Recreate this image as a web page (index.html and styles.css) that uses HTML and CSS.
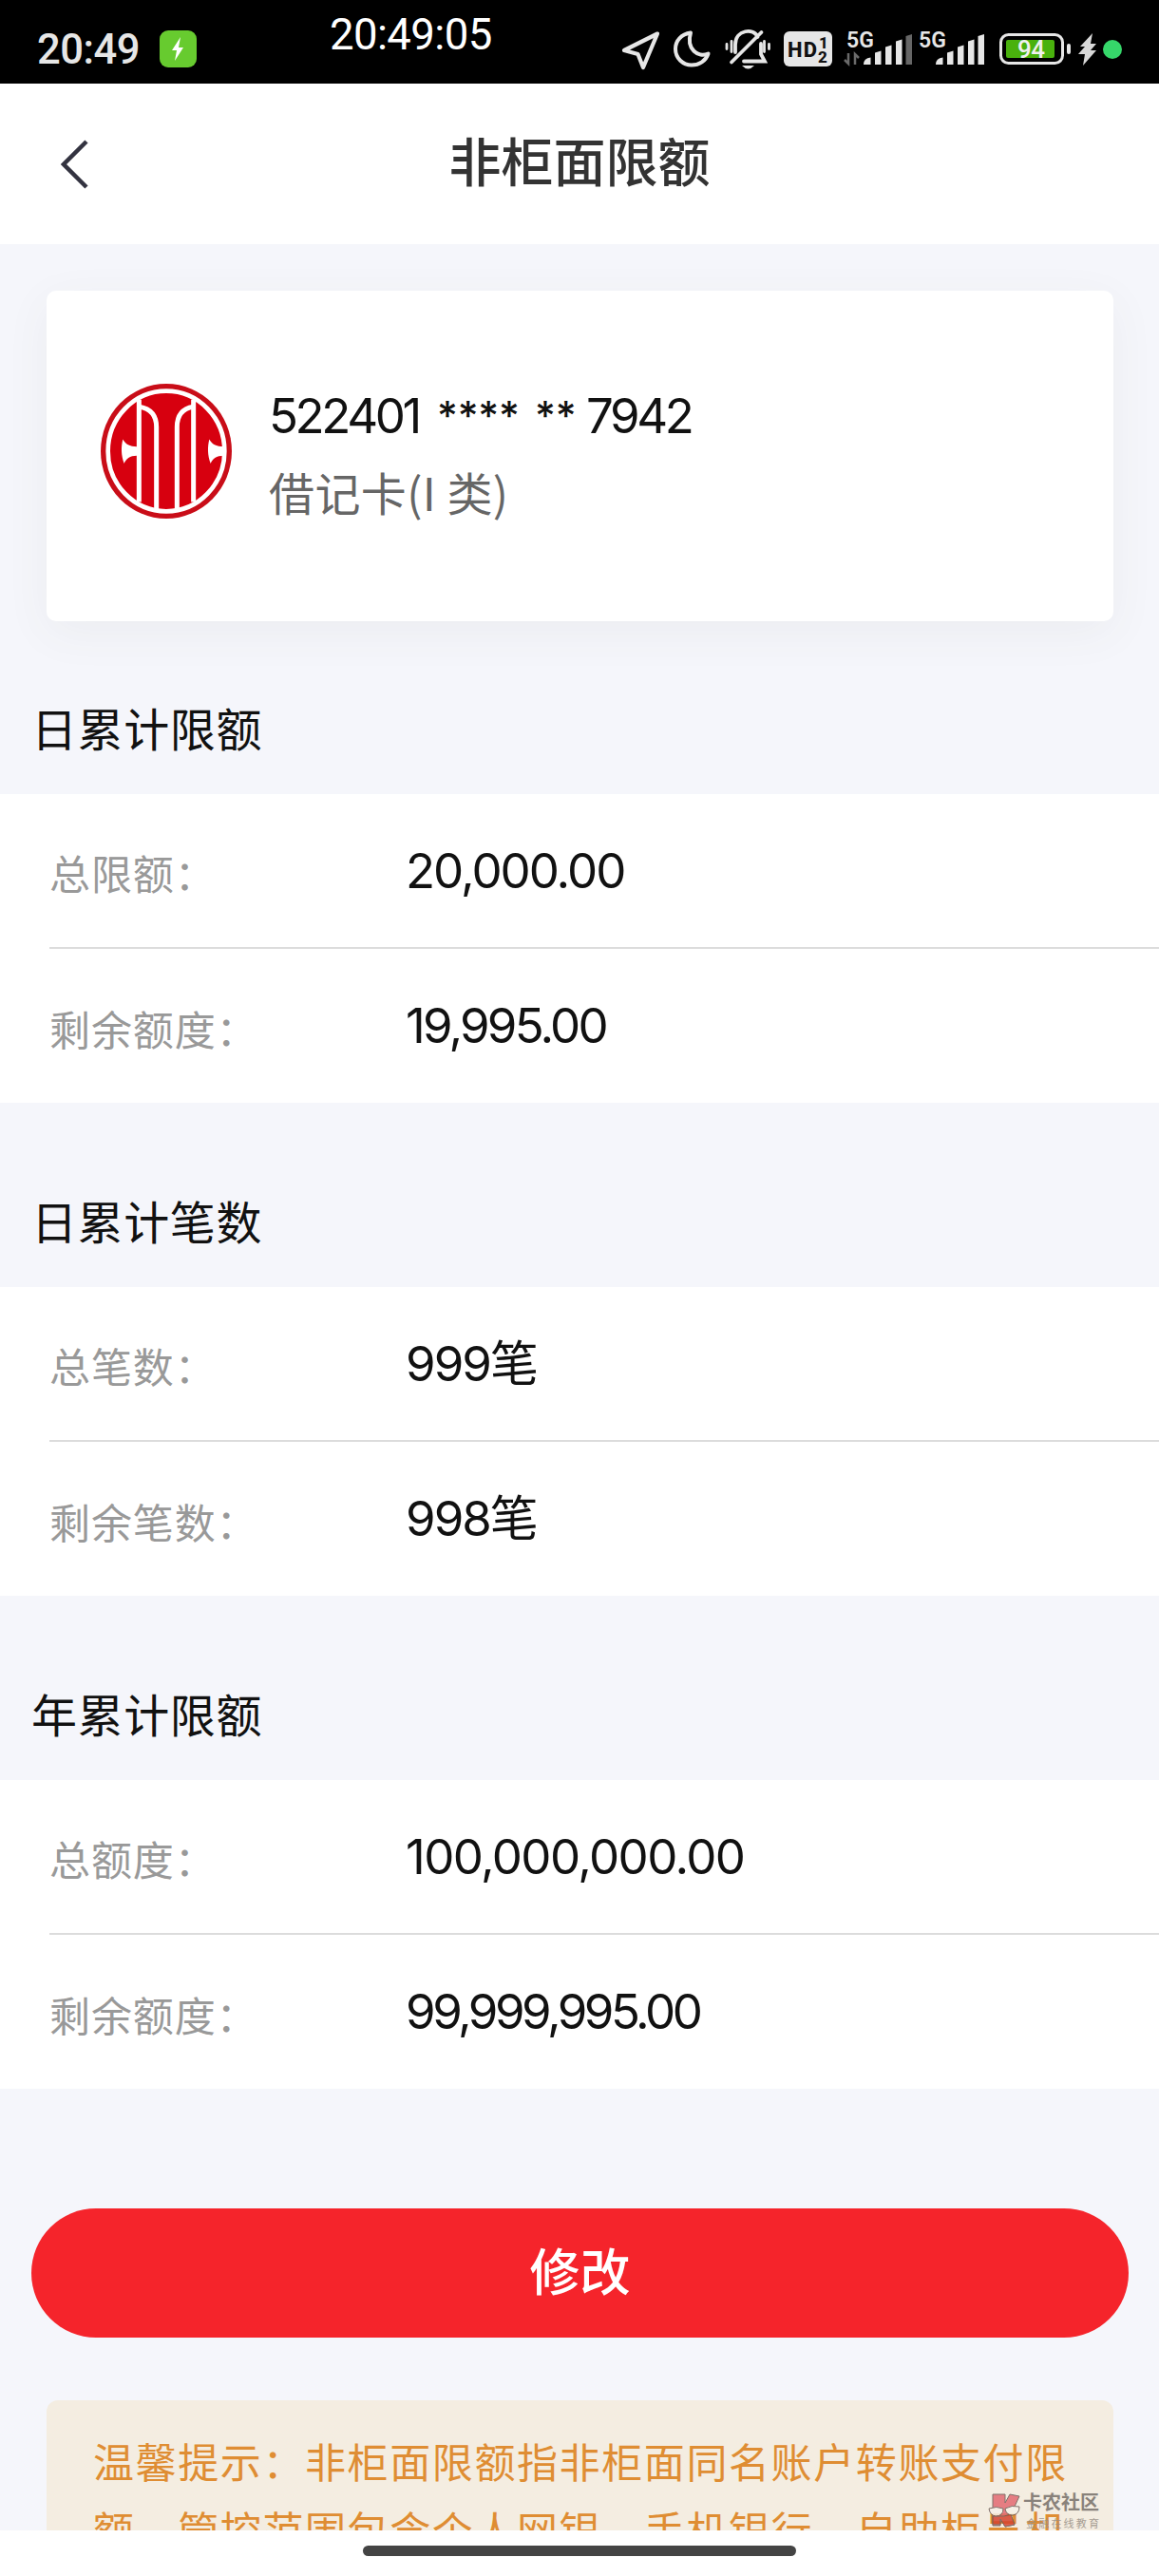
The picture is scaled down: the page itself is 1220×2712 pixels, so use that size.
FILE: index.html
```
<!DOCTYPE html>
<html lang="zh-CN">
<head>
    <meta charset="UTF-8">
    <meta name="viewport" content="width=device-width, initial-scale=1.0">
    <title>非柜面限额</title>
    <link rel="stylesheet" href="styles.css">
</head>
<body>
    <div class="status-bar">
        <span class="status-time">20:49</span>
        <svg class="charge-badge" viewBox="0 0 39 39">
            <rect width="39" height="39" rx="9" fill="#67cb2f"/>
            <path d="M22 7L13 21h5l-2 11 9-14h-5z" fill="#fff"/>
        </svg>
        <span class="status-clock">20:49:05</span>

        <div class="status-icons">
            <!-- location -->
            <svg width="50" height="50" viewBox="652 28 50 50">
                <path d="M692 35.500L657 53l14.500 4L677 71z" fill="none" stroke="#e6e6e6" stroke-width="4.200" stroke-linejoin="round"/>
            </svg>
            <!-- do not disturb -->
            <svg width="53" height="50" viewBox="702 28 53 50">
                <path d="M727 34.500C717 36 711 43 711 51.500C711 61.500 719 68.500 728 68.500C736 68.500 743 64 745.500 56.500C735 61 722 52 727 34.500z" fill="none" stroke="#e6e6e6" stroke-width="4" stroke-linejoin="round"/>
            </svg>
            <!-- muted bell -->
            <svg width="62" height="50" viewBox="755 28 62 50">
                <g fill="none" stroke="#e6e6e6" stroke-width="3.800" stroke-linecap="round">
                    <path d="M774 55V47C774 31 794 29 797.500 39M801 46V57L805 64.500H783M801.500 34L770 65.500"/>
                    <path d="M765 46.500V51.500M770 43.500V54.500M804.500 43.500V54.500M809.500 46.500V51.500" stroke-width="2.800"/>
                </g>
                <path d="M781 69h13q-6.500 7-13 0z" fill="#e6e6e6"/>
            </svg>
            <!-- HD voice -->
            <svg width="65" height="50" viewBox="817 28 65 50">
                <rect x="825" y="33" width="51" height="37" rx="6" fill="#e6e6e6"/>
                <g class="hd-text">
                    <text x="829" y="59.500" font-size="22" textLength="31">HD</text>
                    <text x="862" y="51" font-size="17">1</text>
                    <text x="861" y="66" font-size="17">2</text>
                </g>
            </svg>
            <svg width="81" height="50" viewBox="882 28 81 50">
                <text class="net-text" x="891" y="50" textLength="29">5G</text>
                <path d="M893 56v11l-4-4M900 68V57l4 4" fill="none" stroke="#6a6a6a" stroke-width="2.500"/>
                <path d="M909 68q0-7 7.500-7.500V68zM921 68V55.500l6.500-2V68zM932 68V49.500l6.500-2V68zM943 68V43.500l6.500-2V68z" fill="#e6e6e6"/>
                <path d="M953.500 68V38l6.500-2v32z" fill="#666"/>
            </svg>
            <svg width="79" height="50" viewBox="963 28 79 50">
                <text class="net-text" x="967" y="50" textLength="29">5G</text>
                <path d="M985 68q0-7 7.500-7.500V68zM997 68V55.500l6.500-2V68zM1008 68V49.500l6.500-2V68zM1019 68V43.500l6.500-2V68zM1029.500 68V38l6.500-2v32z" fill="#e6e6e6"/>
            </svg>
            <!-- battery -->
            <svg width="88" height="50" viewBox="1042 28 88 50">
                <rect x="1053.500" y="36.500" width="65" height="30" rx="8" fill="none" stroke="#e6e6e6" stroke-width="3"/>
                <rect x="1059" y="42" width="51" height="19" rx="2" fill="#49b10d"/>
                <rect x="1123" y="46" width="4" height="11" rx="2" fill="#e6e6e6"/>
                <text class="battery-text" x="1071" y="61" textLength="29">94</text>
            </svg>
            <svg width="27" height="50" viewBox="1130 28 27 50">
                <path d="M1150 35L1137 49h5l-7 8h7l-2 12 14-16h-6l6-7h-6z" fill="#d8d8d8"/>
            </svg>
            <svg width="28" height="50" viewBox="1157 28 28 50">
                <circle cx="1171" cy="52" r="10" fill="#36d76a"/>
            </svg>
        </div>
    </div>

    <header class="nav-bar">
        <svg class="back-icon" viewBox="0 0 30 52">
            <path d="M27 2L3 26l24 24" fill="none" stroke="#333340" stroke-width="4.500"/>
        </svg>
        <h1>非柜面限额</h1>
    </header>

    <main class="content">
        <div class="card">
            <svg class="bank-logo" viewBox="48 42 414 424" preserveAspectRatio="none">
                <ellipse cx="255" cy="254" rx="207" ry="212" fill="#c90d18"/>
                <ellipse cx="255" cy="254" rx="184" ry="189" fill="#d7000f" stroke="#fff" stroke-width="14"/>
                <g fill="none" stroke="#fff" stroke-width="15">
                    <path d="M169 92V414M341 92V414"/>
                    <path d="M170 114C204 120 224 140 224 178V440M340 114C306 120 289 140 289 178V440"/>
                </g>
                <path d="M118 217C126 232 140 240 162 240V268C140 268 128 278 122 293C112 268 112 240 118 217zM391 217C399 232 412 240 438 240V268C412 268 401 278 395 293C385 268 385 240 391 217z" fill="#fff"/>
            </svg>
            <div class="card-info">
                <div class="card-number">
                    <span class="num-head">522401</span>
                    <span class="mask">****</span>
                    <span class="mask">**</span>
                    <span class="num-tail">7942</span>
                </div>
                <div class="card-type">借记卡(I 类)</div>
            </div>
        </div>

        <section class="group">
            <h2>日累计限额</h2>
            <div class="list">
                <div class="row">
                    <span class="label">总限额：</span>
                    <span class="value">20,000.00</span>
                </div>
                <div class="row">
                    <span class="label">剩余额度：</span>
                    <span class="value tight">19,995.00</span>
                </div>
            </div>
        </section>

        <section class="group">
            <h2>日累计笔数</h2>
            <div class="list">
                <div class="row">
                    <span class="label">总笔数：</span>
                    <span class="value">999笔</span>
                </div>
                <div class="row">
                    <span class="label">剩余笔数：</span>
                    <span class="value">998笔</span>
                </div>
            </div>
        </section>

        <section class="group">
            <h2>年累计限额</h2>
            <div class="list">
                <div class="row">
                    <span class="label">总额度：</span>
                    <span class="value loose">100,000,000.00</span>
                </div>
                <div class="row">
                    <span class="label">剩余额度：</span>
                    <span class="value tighter">99,999,995.00</span>
                </div>
            </div>
        </section>

        <button class="modify-btn">修改</button>

        <div class="tips">温馨提示：非柜面限额指非柜面同名账户转账支付限额，管控范围包含个人网银、手机银行、自助柜员机</div>
    </main>

    <footer class="home-area">
        <div class="home-bar"></div>
    </footer>

    <div class="watermark">
        <svg width="34" height="36" viewBox="0 0 34 36">
            <g stroke="#6b5a55" stroke-width="1">
                <path d="M5 1h13v9l5-9 10 2-6 13-4 4 5 13-10 2-5-8v7H5z" fill="#e36a72"/>
                <path d="M5 24h12l7-2 4 11-10 2-5-8v6H5z" fill="#d6452f"/>
                <path d="M1 16q8-3 15 0 0 8-8 8-6-1-7-8zM18 16q7-4 15-2 0 8-7 9-7 0-8-7z" fill="#f7f1e8"/>
            </g>
        </svg>
        <div class="watermark-text">
            <div class="watermark-name">卡农社区</div>
            <div class="watermark-sub">金融在线教育</div>
        </div>
    </div>
</body>
</html>
```
FILE: styles.css
```
* {
    box-sizing: border-box;
}

body {
    font-family: 'Inter', 'Noto Sans CJK SC', sans-serif;
    display: flex;
    flex-direction: column;
    position: relative;
    width: 1220px;
    height: 2712px;
    margin: 0;
    overflow: hidden;
    background-color: #f5f6fb;
    color: #111;
}

h1, h2 {
    margin: 0;
}

/* Status bar */
.status-bar {
    display: flex;
    align-items: flex-start;
    flex: none;
    height: 88px;
    padding-left: 39px;
    background-color: #000;
    color: #e6e6e6;
    font-family: 'Roboto', sans-serif;
}

.status-time {
    width: 129px;
    margin-top: 27px;
    font-size: 43.5px;
    font-weight: 500;
    line-height: 51px;
    letter-spacing: -0.5px;
}

.charge-badge {
    width: 39px;
    height: 39px;
    margin-top: 32px;
}

.status-clock {
    width: 305px;
    margin-left: 140px;
    margin-top: 10px;
    color: #fff;
    font-size: 45.5px;
    line-height: 53px;
    letter-spacing: -0.6px;
}

.status-icons {
    display: flex;
    margin-top: 28px;
}

.status-icons svg {
    display: block;
}

.status-icons text {
    font-family: 'Roboto', sans-serif;
}

.hd-text {
    fill: #111;
    font-weight: 800;
}

.net-text {
    fill: #e6e6e6;
    font-size: 23px;
    font-weight: 600;
}

.battery-text {
    fill: #f0f0f0;
    font-size: 26px;
    font-weight: 500;
}

/* Title bar */
.nav-bar {
    display: flex;
    align-items: center;
    flex: none;
    height: 169px;
    padding: 0 64px;
    background-color: #fff;
}

.back-icon {
    width: 30px;
    height: 52px;
}

.nav-bar h1 {
    flex: 1;
    margin-right: 30px;
    padding-bottom: 3px;
    color: #333;
    font-size: 55px;
    font-weight: 500;
    line-height: 80px;
    text-align: center;
}

/* Scroll area */
.content {
    flex: 1;
    min-height: 0;
    overflow: hidden;
    padding-top: 49px;
}

.card {
    display: flex;
    height: 348px;
    margin: 0 48px 48px 49px;
    padding: 98px 0 0 57px;
    border-radius: 10px;
    background-color: #fff;
    box-shadow: 0 12px 48px rgba(80, 90, 60, 0.06);
}

.bank-logo {
    width: 138px;
    height: 142px;
}

.card-info {
    margin-left: 39px;
}

.card-number {
    display: flex;
    font-size: 51px;
    line-height: 68px;
}

.num-head {
    width: 177px;
    letter-spacing: -3.4px;
}

.mask {
    width: 103px;
    font-size: 42px;
    font-weight: 500;
    letter-spacing: -0.2px;
}

.mask + .mask {
    width: 54px;
}

.num-tail {
    letter-spacing: -3.4px;
}

.card-type {
    margin-top: 10px;
    color: #666;
    font-family: 'Noto Sans CJK SC', sans-serif;
    font-size: 48px;
    line-height: 70px;
    letter-spacing: 0.4px;
}

/* Limit groups */
.group + .group {
    margin-top: 60px;
}

.group h2 {
    height: 134px;
    padding-left: 33px;
    font-size: 48px;
    font-weight: 400;
    line-height: 134px;
    letter-spacing: 0.6px;
}

.list {
    height: 325px;
    padding-left: 52px;
    background-color: #fff;
}

.row {
    display: flex;
    align-items: center;
    height: 161px;
}

.row + .row {
    height: 164px;
    border-top: 2px solid #dcdcdc;
}

.label {
    width: 375px;
    padding-top: 3px;
    color: #999;
    font-size: 43px;
    letter-spacing: 0.9px;
}

.value {
    font-size: 51px;
    line-height: 62px;
    letter-spacing: -2px;
}

.value.loose {
    letter-spacing: -1.6px;
}

.value.tight {
    letter-spacing: -2.8px;
}

.value.tighter {
    letter-spacing: -3.5px;
}

.modify-btn {
    display: block;
    width: 1155px;
    height: 136px;
    margin: 126px 0 66px 33px;
    padding: 0 0 8px;
    border: none;
    border-radius: 68px;
    background-color: #f5242b;
    color: #fff;
    font-family: inherit;
    font-size: 53px;
    font-weight: 500;
}

.tips {
    height: 300px;
    margin: 0 48px 0 49px;
    padding: 31px 40px 0 49px;
    border-radius: 12px;
    background-color: #f4ede1;
    color: #df8d33;
    font-size: 43px;
    line-height: 71.7px;
    letter-spacing: 1.6px;
}

.home-area {
    flex: none;
    height: 48px;
    padding-top: 16px;
    background-color: #fff;
}

.home-bar {
    width: 456px;
    height: 11px;
    margin: 0 auto;
    border-radius: 6px;
    background-color: #444;
}

/* Community mark over the tips */
.watermark {
    display: flex;
    position: absolute;
    left: 1040px;
    top: 2625px;
    opacity: 0.85;
}

.watermark-text {
    margin-left: 3px;
    color: #77706a;
}

.watermark-name {
    font-size: 20px;
    font-weight: 700;
    line-height: 21px;
}

.watermark-sub {
    padding-left: 3px;
    color: #999086;
    font-size: 11px;
    line-height: 22px;
    letter-spacing: 2.2px;
}
```
